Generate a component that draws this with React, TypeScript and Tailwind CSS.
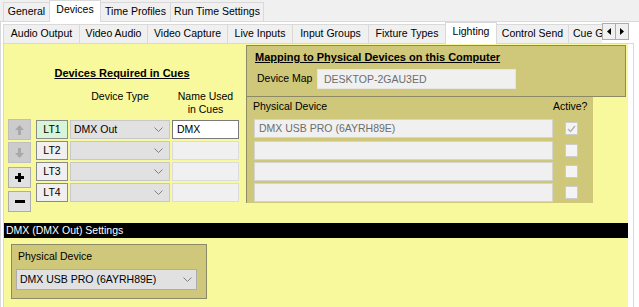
import React from "react";

const OLIVE = "bg-[#cfc779]";
const OBORDER = "border-[#8c8a66]";

function Chevron() {
  return (
    <svg width="9" height="5" viewBox="0 0 9 5" className="shrink-0">
      <polyline points="0.5,0.5 4.5,4.5 8.5,0.5" fill="none" stroke="#808080" strokeWidth="1" />
    </svg>
  );
}

function Tab({ w, label, selected, first }: { w: number; label: string; selected?: boolean; first?: boolean }) {
  const ml = first ? "" : "-ml-px";
  if (selected) {
    return (
      <div
        className={`relative z-10 h-[22px] bg-white border border-b-0 border-[#d9d9d9] text-center leading-[17px] whitespace-nowrap ${ml}`}
        style={{ width: w }}
      >
        {label}
      </div>
    );
  }
  return (
    <div
      className={`mt-[2px] h-[19px] bg-[#f0f0f0] border border-b-0 border-[#d9d9d9] text-center leading-[17px] whitespace-nowrap ${ml}`}
      style={{ width: w }}
    >
      {label}
    </div>
  );
}

function UpArrow({ down }: { down?: boolean }) {
  return (
    <svg width="9" height="10" viewBox="0 0 9 10" style={down ? { transform: "rotate(180deg)" } : undefined}>
      <polygon points="4.5,0 9,5 6,5 6,10 3,10 3,5 0,5" fill="#a8a8a8" />
    </svg>
  );
}

export default function App() {
  const rows = [0, 1, 2, 3];
  return (
    <div className="w-[639px] h-[307px] overflow-hidden bg-[#f0f0f0] text-black text-[10.5px] font-['Liberation_Sans',Arial,sans-serif]">
      {/* top tab strip */}
      <div className="flex h-[21px] items-start pl-[3px]">
        <Tab w={47} label="General" first />
        <Tab w={52} label="Devices" selected />
        <Tab w={71} label="Time Profiles" />
        <Tab w={94} label="Run Time Settings" />
      </div>
      {/* page */}
      <div className="h-[286px] bg-white border-t border-l border-[#d9d9d9] pl-[2px]">
        {/* second tab strip */}
        <div className="flex h-[21px] items-start">
          <Tab w={77} label="Audio Output" first />
          <Tab w={69} label="Video Audio" />
          <Tab w={81} label="Video Capture" />
          <Tab w={66} label="Live Inputs" />
          <Tab w={77} label="Input Groups" />
          <Tab w={78} label="Fixture Types" />
          <Tab w={52} label="Lighting" selected />
          <Tab w={73} label="Control Send" />
          <div className="-ml-px mt-[2px] h-[19px] w-[34px] overflow-hidden bg-[#f0f0f0] border-l border-t border-[#d9d9d9] pl-[4px] leading-[17px] whitespace-nowrap">
            Cue Groups
          </div>
          <div className="mt-[1px] flex">
            <div className="h-[17px] w-[14px] border border-[#adadad] bg-[#f0f0f0] flex items-center justify-center">
              <svg width="4" height="7" viewBox="0 0 4 7"><polygon points="4,0 4,7 0,3.5" fill="#000" /></svg>
            </div>
            <div className="-ml-px h-[17px] w-[14px] border border-[#adadad] bg-[#f0f0f0] flex items-center justify-center">
              <svg width="4" height="7" viewBox="0 0 4 7"><polygon points="0,0 0,7 4,3.5" fill="#000" /></svg>
            </div>
          </div>
        </div>
        {/* content panel */}
        <div className="w-[631px] h-[264px] border-l border-t border-r border-[#d9d9d9] bg-white">
          <div className="w-[624px] h-[263px] bg-[#f8f89c] flex flex-col">
            {/* top section */}
            <div className="h-[179px] flex">
              {/* left column */}
              <div className="w-[242px] flex flex-col">
                <div className="mt-[23px] ml-[47px] w-[142px] h-[13px] leading-[13px] text-[11px] font-bold underline text-center whitespace-nowrap">
                  Devices Required in Cues
                </div>
                <div className="mt-[10px] flex pl-[66px] leading-[13px]">
                  <div className="w-[100px] text-center">Device Type</div>
                  <div className="ml-[2px] w-[67px] text-center">
                    Name Used
                    <br />
                    in Cues
                  </div>
                </div>
                <div className="mt-[3px] flex">
                  <div className="ml-[4px] w-[23px] flex flex-col">
                    <div className="h-[21px] bg-[#cccccc] border border-[#bfbfbf] flex items-center justify-center">
                      <UpArrow />
                    </div>
                    <div className="mt-[2px] h-[21px] bg-[#cccccc] border border-[#bfbfbf] flex items-center justify-center">
                      <UpArrow down />
                    </div>
                    <div className="mt-[4px] h-[21px] bg-[#e1e1e1] border border-[#adadad] flex items-center justify-center">
                      <svg width="9" height="9" viewBox="0 0 9 9">
                        <rect x="3" y="0" width="3" height="9" fill="#000" />
                        <rect x="0" y="3" width="9" height="3" fill="#000" />
                      </svg>
                    </div>
                    <div className="mt-[3px] h-[21px] bg-[#e1e1e1] border border-[#adadad] flex items-center justify-center">
                      <svg width="10" height="3" viewBox="0 0 10 3">
                        <rect x="0" y="0" width="10" height="3" fill="#000" />
                      </svg>
                    </div>
                  </div>
                  <div className="ml-[5px] mt-[1px] flex flex-col gap-[2px]">
                    {rows.map((i) => (
                      <div key={i} className="flex h-[19px]">
                        <div
                          className={`w-[32px] h-[19px] border border-[#8a8a8a] text-center leading-[17px] ${
                            i === 0 ? "bg-[#d7f5d7]" : "bg-[#f0f0f0]"
                          }`}
                        >
                          LT{i + 1}
                        </div>
                        <div className="ml-[2px] w-[100px] h-[19px] bg-[#e1e1e1] border border-[#c8c8c8] flex items-center justify-between pl-[3px] pr-[6px]">
                          <span>{i === 0 ? "DMX Out" : ""}</span>
                          <Chevron />
                        </div>
                        <div
                          className={`ml-[2px] w-[67px] h-[19px] pl-[4px] leading-[17px] ${
                            i === 0 ? "bg-white border border-[#7a7a7a]" : "bg-[#f0f0f0] border border-[#dcdcdc]"
                          }`}
                        >
                          {i === 0 ? "DMX" : ""}
                        </div>
                      </div>
                    ))}
                  </div>
                </div>
              </div>
              {/* right column */}
              <div className="w-[380px] flex flex-col">
                <div className={`mt-[1px] h-[52px] border ${OBORDER} ${OLIVE} flex flex-col`}>
                  <div className="mt-[5px] ml-[8px] h-[13px] leading-[13px] text-[11px] font-bold underline whitespace-nowrap">
                    Mapping to Physical Devices on this Computer
                  </div>
                  <div className="mt-[5px] flex items-center">
                    <div className="ml-[10px] w-[60px]">Device Map</div>
                    <div className="w-[199px] h-[20px] bg-[#f0f0f0] border border-[#e6e6e0] pl-[6px] leading-[18px] text-[#6d6d6d]">
                      DESKTOP-2GAU3ED
                    </div>
                  </div>
                </div>
                <div className={`w-[347px] h-[106px] ${OLIVE} border-l ${OBORDER} flex flex-col`}>
                  <div className="mt-[3px] flex h-[13px] leading-[13px]">
                    <div className="pl-[6px] w-[306px]">Physical Device</div>
                    <div>Active?</div>
                  </div>
                  <div className="mt-[6px] flex flex-col">
                    {rows.map((i) => (
                      <div key={i} className={`flex items-center h-[19px] ${i === 0 ? "mb-[3px]" : "mb-[2px]"}`}>
                        <div className="ml-[7px] w-[299px] h-[19px] bg-[#f0f0f0] border border-[#d4d4d0] pl-[4px] leading-[17px] text-[#6d6d6d]">
                          {i === 0 ? "DMX USB PRO (6AYRH89E)" : ""}
                        </div>
                        <div className="ml-[12px] w-[13px] h-[13px] bg-[#f4f4f4] border border-[#cccccc] flex items-center justify-center">
                          {i === 0 ? (
                            <svg width="9" height="8" viewBox="0 0 9 8">
                              <polyline points="1,4 3.5,6.5 8,1" fill="none" stroke="#b0b0b0" strokeWidth="1.3" />
                            </svg>
                          ) : null}
                        </div>
                      </div>
                    ))}
                  </div>
                </div>
              </div>
            </div>
            {/* black bar */}
            <div className="h-[15px] bg-black text-white pl-[2px] leading-[15px] whitespace-nowrap">
              DMX (DMX Out) Settings
            </div>
            {/* group box */}
            <div className={`mt-[6px] ml-[7px] w-[196px] h-[55px] border ${OBORDER} ${OLIVE} flex flex-col`}>
              <div className="mt-[5px] pl-[6px] leading-[13px]">Physical Device</div>
              <div className="mt-[6px] ml-[4px] w-[181px] h-[21px] bg-[#e1e1e1] border border-[#adadad] flex items-center justify-between pl-[3px] pr-[4px]">
                <span>DMX USB PRO (6AYRH89E)</span>
                <Chevron />
              </div>
            </div>
          </div>
        </div>
      </div>
    </div>
  );
}
